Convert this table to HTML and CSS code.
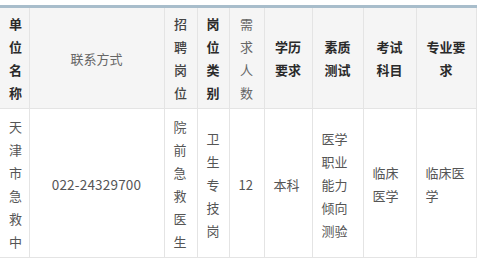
FILE: index.html
```html
<!DOCTYPE html>
<html lang="zh-CN">
<head>
<meta charset="utf-8">
<link rel="stylesheet" href="styles.css">
</head>
<body>
<div class="wrap">
<table class="jobs">
  <colgroup>
    <col class="c1"><col class="c2"><col class="c3"><col class="c4"><col class="c5"><col class="c6"><col class="c7"><col class="c8"><col class="c9">
  </colgroup>
  <thead>
    <tr>
      <th class="bold">单位名称</th>
      <th class="light">联系方式</th>
      <th class="mid">招聘岗位</th>
      <th class="bold">岗位类别</th>
      <th class="light">需求人数</th>
      <th class="bold">学历要求</th>
      <th class="bold">素质测试</th>
      <th class="bold">考试科目</th>
      <th class="bold">专业要求</th>
    </tr>
  </thead>
  <tbody>
    <tr>
      <td>天津市急救中</td>
      <td class="center phone">022-24329700</td>
      <td>院前急救医生</td>
      <td>卫生专技岗</td>
      <td>12</td>
      <td>本科</td>
      <td>医学职业能力倾向测验</td>
      <td>临床医学</td>
      <td>临床医学</td>
    </tr>
  </tbody>
</table>
</div>
</body>
</html>
```
FILE: styles.css
```css
html, body {
  margin: 0;
  padding: 0;
  background: #ffffff;
}
.wrap {
  padding-top: 5px;
}
.jobs {
  width: 476px;
  table-layout: fixed;
  border-collapse: collapse;
  border-top: 3px solid #a8bdcb;
  font-family: "Noto Sans CJK SC", "Noto Sans", sans-serif;
  font-size: 13px;
  line-height: 23px;
}
.c1 { width: 29px; }
.c2 { width: 135px; }
.c3 { width: 33px; }
.c4 { width: 32px; }
.c5 { width: 35px; }
.c6 { width: 48px; }
.c7 { width: 51px; }
.c8 { width: 53px; }
.c9 { width: 60px; }
.jobs th, .jobs td {
  border: 1px solid #e4e4e4;
  vertical-align: middle;
  word-break: break-all;
}
.jobs th:first-child, .jobs td:first-child {
  border-left: none;
}
.jobs th {
  background: #f5f5f5;
  height: 92px;
  padding: 4px 9px;
  text-align: center;
  color: #333;
}
.jobs th.bold { font-weight: 700; color: #2a2a2a; }
.jobs th.mid { font-weight: 500; color: #444; }
.jobs th.light { font-weight: 400; color: #666; }
.jobs td {
  height: 138px;
  padding: 6px 9px 4px 9px;
  text-align: left;
  color: #555;
}
.jobs td.center {
  text-align: center;
}
.jobs td.phone {
  font-size: 13.5px;
  letter-spacing: 0.2px;
}
```
